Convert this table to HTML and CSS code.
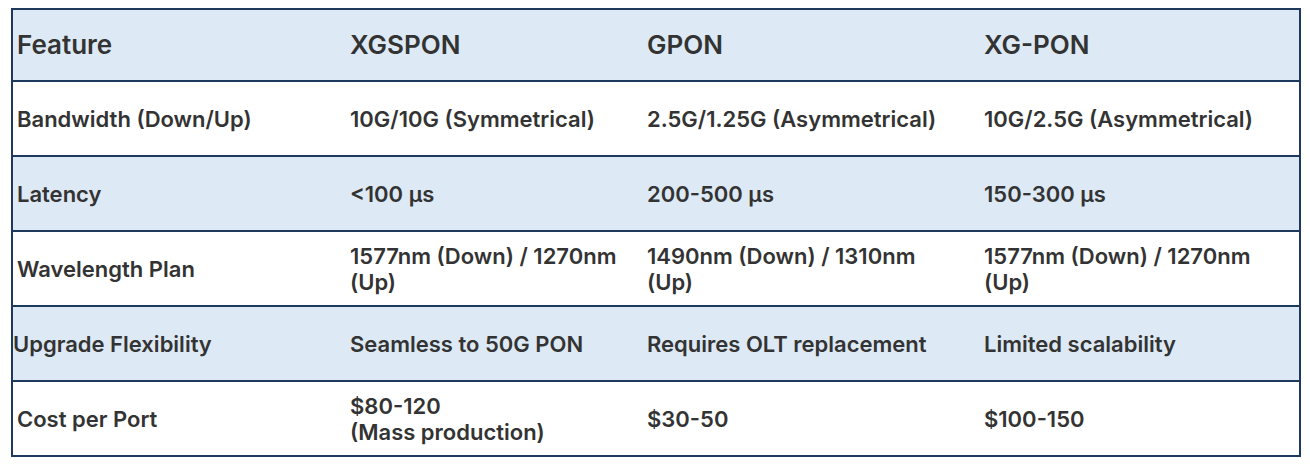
FILE: index.html
```html
<!DOCTYPE html>
<html>
<head>
<meta charset="utf-8">
<link rel="stylesheet" href="styles.css">
</head>
<body>
<table class="cmp">
  <colgroup>
    <col class="c1"><col class="c2"><col class="c3"><col class="c4">
  </colgroup>
  <thead>
    <tr class="shade">
      <th>Feature</th><th>XGSPON</th><th>GPON</th><th>XG-PON</th>
    </tr>
  </thead>
  <tbody>
    <tr>
      <td>Bandwidth (Down/Up)</td><td>10G/10G (Symmetrical)</td><td>2.5G/1.25G (Asymmetrical)</td><td>10G/2.5G (Asymmetrical)</td>
    </tr>
    <tr class="shade">
      <td>Latency</td><td>&lt;100 μs</td><td>200-500 μs</td><td>150-300 μs</td>
    </tr>
    <tr>
      <td>Wavelength Plan</td><td>1577nm (Down) / 1270nm (Up)</td><td>1490nm (Down) / 1310nm (Up)</td><td>1577nm (Down) / 1270nm (Up)</td>
    </tr>
    <tr class="shade">
      <td class="tight">Upgrade Flexibility</td><td>Seamless to 50G PON</td><td>Requires OLT replacement</td><td>Limited scalability</td>
    </tr>
    <tr>
      <td>Cost per Port</td><td>$80-120<br>(Mass production)</td><td>$30-50</td><td>$100-150</td>
    </tr>
  </tbody>
</table>
</body>
</html>
```
FILE: styles.css
```css
html, body {
  margin: 0;
  padding: 0;
  background: #ffffff;
}
body {
  padding: 8px 0 0 11px;
  font-family: Inter, "Noto Sans", sans-serif;
  color: #333333;
}
.cmp {
  border-collapse: collapse;
  width: 1288px;
  table-layout: fixed;
  border: 2px solid #1d3a5e;
}
.c1 { width: 334px; }
.c2 { width: 297px; }
.c3 { width: 337px; }
.c4 { width: 320px; }
.cmp th, .cmp td {
  text-align: left;
  vertical-align: middle;
  padding: 0 20px 0 4px;
  font-weight: 600;
  border-top: 2px solid #1d3a5e;
  border-bottom: 2px solid #1d3a5e;
}
.cmp th {
  height: 70px;
  font-size: 26px;
  line-height: 30px;
}
.cmp td {
  height: 73px;
  font-size: 22px;
  line-height: 26px;
}
.cmp td.tight {
  padding-left: 0;
  padding-right: 0;
}
.shade {
  background: #dde9f4;
}
```
